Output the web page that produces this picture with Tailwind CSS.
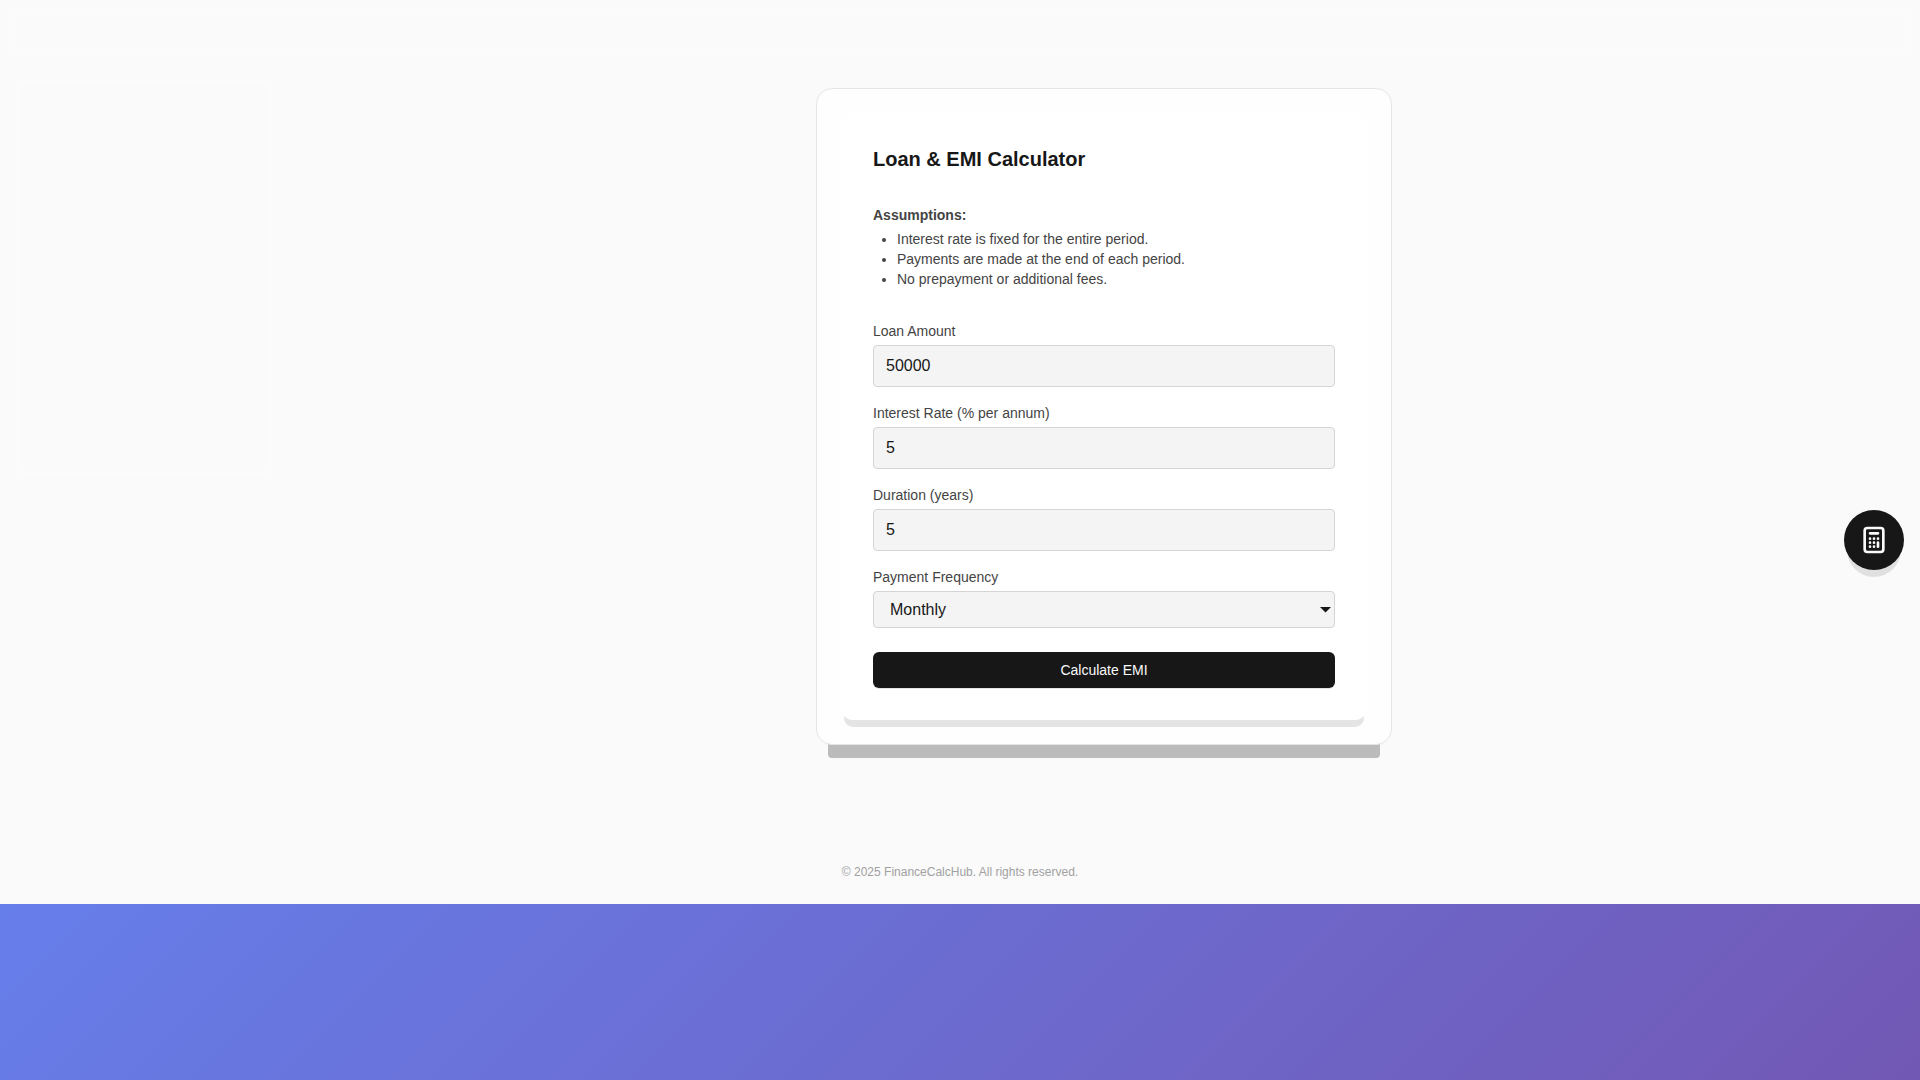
<!DOCTYPE html>
<html lang="en">
<head>
    <meta charset="UTF-8">
    <meta name="viewport" content="width=device-width, initial-scale=1.0">
    <title>Loan & EMI Calculator</title>
    <script src="https://cdn.jsdelivr.net/npm/@tailwindcss/browser@4"></script>
</head>

<body class="bg-[linear-gradient(135deg,#667eea_0%,#764ba2_100%)] font-[Arial,'Liberation_Sans',sans-serif] text-neutral-900">

<div class="relative bg-neutral-50">
    <!-- Faint nav and sidebar panels -->
    <div class="absolute inset-x-[10px] top-[9px] h-[46px] rounded-lg border-2 border-white/30"></div>
    <div class="absolute left-4 top-20 h-[396px] w-64 rounded-xl border-4 border-white/20"></div>

    <!-- Calculator -->
    <main class="relative pl-72 pt-[88px]">
        <div class="mx-auto max-w-xl rounded-2xl border border-neutral-200 bg-[#fefefe] p-6 shadow-[0_25px_0_-12px_rgb(0_0_0/0.25)]">
            <div class="rounded-xl bg-white p-8 shadow-[0_10px_0_-3px_rgb(0_0_0/0.1)]">
                <h1 class="mb-8 text-xl leading-7 font-bold">Loan &amp; EMI Calculator</h1>

                <div class="mb-8 text-sm text-[#444]">
                    <strong class="mb-1 block font-bold">Assumptions:</strong>
                    <ul class="list-disc pl-6">
                        <li>Interest rate is fixed for the entire period.</li>
                        <li>Payments are made at the end of each period.</li>
                        <li>No prepayment or additional fees.</li>
                    </ul>
                </div>

                <form id="emiForm">
                    <div class="mb-4">
                        <label for="amount" class="mb-1 block text-sm text-[#444]">Loan Amount</label>
                        <input id="amount" type="text" inputmode="numeric" value="50000" class="block w-full rounded border border-neutral-300 bg-[#f4f4f4] px-3 py-2 text-base">
                    </div>
                    <div class="mb-4">
                        <label for="rate" class="mb-1 block text-sm text-[#444]">Interest Rate (% per annum)</label>
                        <input id="rate" type="text" inputmode="decimal" value="5" class="block w-full rounded border border-neutral-300 bg-[#f4f4f4] px-3 py-2 text-base">
                    </div>
                    <div class="mb-4">
                        <label for="years" class="mb-1 block text-sm text-[#444]">Duration (years)</label>
                        <input id="years" type="text" inputmode="numeric" value="5" class="block w-full rounded border border-neutral-300 bg-[#f4f4f4] px-3 py-2 text-base">
                    </div>
                    <div class="mb-6">
                        <label for="frequency" class="mb-1 block text-sm text-[#444]">Payment Frequency</label>
                        <div class="relative">
                            <select id="frequency" class="block h-[37px] w-full appearance-none rounded border border-neutral-300 bg-[#f4f4f4] px-4 text-base">
                                <option>Monthly</option>
                                <option>Quarterly</option>
                                <option>Yearly</option>
                            </select>
                            <svg class="pointer-events-none absolute right-1 top-4 h-[6px] w-[11px]" viewBox="0 0 11 6" fill="currentColor">
                                <path d="M0 0h11L5.5 5.5z"></path>
                            </svg>
                        </div>
                    </div>
                    <button type="submit" class="block h-9 w-full rounded-md bg-neutral-900 text-sm text-neutral-50 shadow-[0_1px_0_0_rgb(0_0_0/0.1)]">Calculate EMI</button>
                </form>
            </div>
        </div>
    </main>

    <footer class="relative pt-[119px] pb-6 text-center text-xs text-neutral-400">&copy; 2025 FinanceCalcHub. All rights reserved.</footer>
</div>

<!-- Floating button -->
<button type="button" aria-label="Open calculator" class="fixed right-4 top-1/2 flex size-15 -translate-y-1/2 items-center justify-center rounded-full bg-neutral-900 text-neutral-50 shadow-[0_10px_0_-3px_rgb(0_0_0/0.1)]">
    <svg class="size-8" fill="none" stroke="currentColor" viewBox="0 0 24 24">
        <path stroke-linecap="round" stroke-linejoin="round" stroke-width="2" d="M9 7h6m0 10v-3m-3 3h.01M9 17h.01M9 14h.01M12 14h.01M15 11h.01M12 11h.01M9 11h.01M7 21h10a2 2 0 002-2V5a2 2 0 00-2-2H7a2 2 0 00-2 2v14a2 2 0 002 2z"></path>
    </svg>
</button>

<script>
    document.getElementById("emiForm").onsubmit = function(event) {
        event.preventDefault();
    };
</script>

</body>
</html>
